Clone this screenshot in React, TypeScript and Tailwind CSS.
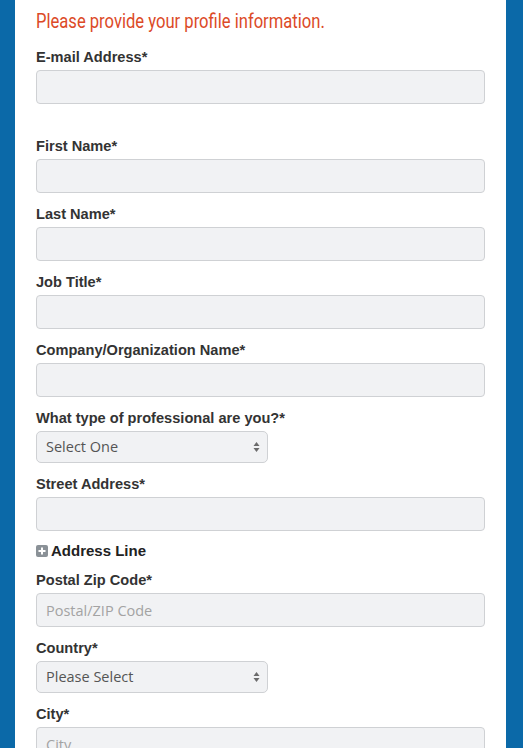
import { ReactNode } from 'react';

const labelClass = "block h-[20px] leading-[20px] text-[14.6px] font-bold text-[#333] mb-[3px]";
const inputClass =
	"block h-[34px] w-[449px] rounded-[4px] border border-[#cfd1d4] bg-[#f1f2f4] px-[9px] text-[14.5px] text-[#555] placeholder:text-[#a3a3a3] outline-none";

function Field(props: { label: string; placeholder?: string; className?: string; children?: ReactNode }) {
	const { label, placeholder, className, children } = props;
	return (
		<div className={className}>
			<label className={labelClass}>{label}</label>
			{children ? children : <input className={inputClass} placeholder={placeholder} style={{ fontFamily: '"Open Sans", sans-serif' }} />}
		</div>
	);
}

/** A native-looking select with the little up/down arrows */
function SelectBox(props: { value: string }) {
	return (
		<div className="flex h-[32px] w-[232px] items-center justify-between rounded-[5px] border border-[#cfd1d4] bg-[#f1f2f4] pl-[9px] pr-[7px]">
			<span className="text-[14.5px] text-[#555]" style={{ fontFamily: '"Open Sans", sans-serif' }}>
				{props.value}
			</span>
			<svg width="7" height="12" viewBox="0 0 7 12">
				<path d="M3.5 1 L6.5 5 H0.5 Z" fill="#6b6b6b" />
				<path d="M3.5 11 L6.5 7 H0.5 Z" fill="#6b6b6b" />
			</svg>
		</div>
	);
}

export default function App() {
	return (
		<div className="flex min-h-screen bg-[#0b69a8]" style={{ fontFamily: '"Liberation Sans", Arial, sans-serif' }}>
			<div className="w-[15px] shrink-0" />
			<div className="w-[491px] shrink-0 bg-white px-[21px] pb-10">
				<div className="pt-[9px] h-[32px] overflow-visible">
					<h1
						className="inline-block origin-left scale-x-[0.79] whitespace-nowrap text-[21px] leading-[24px] text-[#dc4a27]"
						style={{ fontFamily: 'Roboto, sans-serif' }}
					>
						Please provide your profile information.
					</h1>
				</div>
				<Field label="E-mail Address*" className="mt-[15px]" />
				<Field label="First Name*" className="mt-[32px]" />
				<Field label="Last Name*" className="mt-[11px]" />
				<Field label="Job Title*" className="mt-[11px]" />
				<Field label="Company/Organization Name*" className="mt-[11px]" />
				<Field label="What type of professional are you?*" className="mt-[11px]">
					<SelectBox value="Select One" />
				</Field>
				<Field label="Street Address*" className="mt-[11px]" />
				<div className="mt-[10px] flex h-[20px] items-center gap-[3px] text-[15px] font-bold text-[#222]">
					<span className="flex h-[12px] w-[12px] items-center justify-center rounded-[2px] bg-[#8a9197]">
						<svg width="8" height="8" viewBox="0 0 8 8">
							<path d="M3 0.5 H5 V3 H7.5 V5 H5 V7.5 H3 V5 H0.5 V3 H3 Z" fill="#fff" />
						</svg>
					</span>
					Address Line
				</div>
				<Field label="Postal Zip Code*" placeholder="Postal/ZIP Code" className="mt-[9px]" />
				<Field label="Country*" className="mt-[11px]">
					<SelectBox value="Please Select" />
				</Field>
				<Field label="City*" placeholder="City" className="mt-[11px]" />
			</div>
			<div className="w-[17px] shrink-0" />
			<div className="w-[2px] shrink-0 bg-white" />
		</div>
	);
}
